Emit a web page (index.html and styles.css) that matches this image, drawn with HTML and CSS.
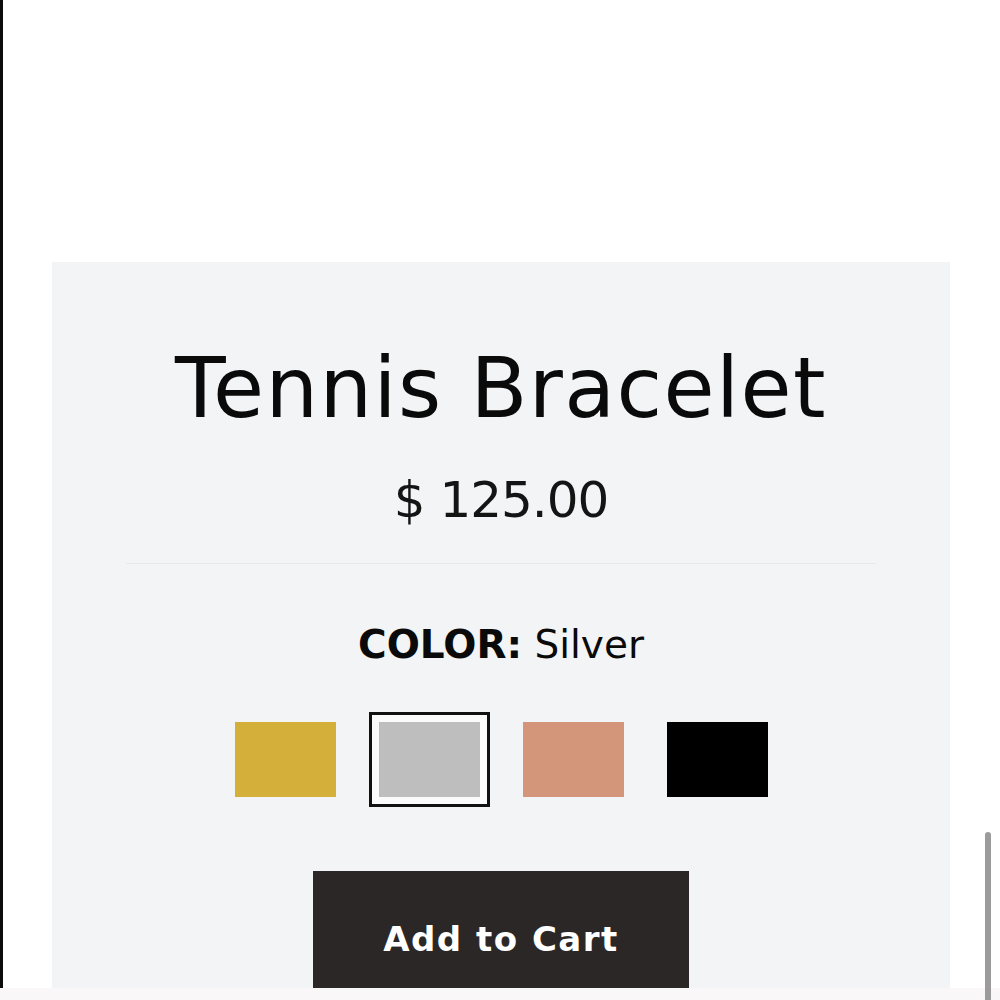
FILE: index.html
```html
<!DOCTYPE html>
<html lang="en">
<head>
<meta charset="utf-8">
<title>Tennis Bracelet</title>
<link rel="stylesheet" href="styles.css">
</head>
<body>
<div class="page">
  <div class="frame">
    <section class="card">
      <h1 class="title">Tennis Bracelet</h1>
      <p class="price">$ 125.00</p>
      <hr class="divider">
      <p class="color-label"><strong>COLOR:</strong> Silver</p>
      <div class="swatches">
        <span class="swatch gold"></span>
        <span class="swatch silver selected"></span>
        <span class="swatch rose"></span>
        <span class="swatch black"></span>
      </div>
      <button class="cart-btn" type="button">Add to Cart</button>
    </section>
  </div>
  <div class="bottom-strip"></div>
  <div class="scrollbar"></div>
</div>
</body>
</html>
```
FILE: styles.css
```css
html, body {
  margin: 0;
  padding: 0;
  background: #ffffff;
}

.page {
  position: relative;
  width: 1000px;
  height: 1000px;
  overflow: hidden;
  font-family: "DejaVu Sans", "Liberation Sans", sans-serif;
}

.frame {
  box-sizing: border-box;
  height: 988px;
  border-left: 3px solid #0c0c0c;
  padding-top: 262px;
  padding-left: 49px;
  overflow: hidden;
}

.card {
  width: 898px;
  min-height: 800px;
  background: #f2f4f5;
  display: flex;
  flex-direction: column;
  align-items: center;
  padding-top: 85px;
  box-sizing: border-box;
}

.title {
  margin: 0;
  font-size: 83px;
  line-height: 1;
  font-weight: 400;
  color: #0a0a0a;
  letter-spacing: 1.4px;
}

.price {
  margin: 45px 0 0;
  font-size: 50px;
  line-height: 1;
  color: #141414;
  letter-spacing: -1px;
}

.divider {
  width: 750px;
  margin: 38px 0 0;
  border: 0;
  height: 1px;
  background: #e7e9eb;
}

.color-label {
  margin: 61px 0 0;
  font-size: 39px;
  line-height: 1;
  color: #0a0a0a;
}

.color-label strong {
  font-weight: 700;
}

.swatches {
  margin-top: 58px;
  display: flex;
  gap: 43px;
}

.swatch {
  display: block;
  width: 101px;
  height: 75px;
}

.gold { background: #d4b03a; }
.silver { background: #bebebe; }
.rose { background: #d3967b; }
.black { background: #000; }

.selected {
  box-shadow: 0 0 0 7px #fbfbfb, 0 0 0 10px #111;
}

.cart-btn {
  margin-top: 74px;
  width: 376px;
  height: 170px;
  padding: 51px 0 0;
  align-self: center;
  display: flex;
  justify-content: center;
  align-items: flex-start;
  border: 0;
  background: #2b2726;
  color: #fff;
  font-family: "DejaVu Sans", "Liberation Sans", sans-serif;
  font-weight: 700;
  font-size: 34px;
  line-height: 1;
  letter-spacing: 1.5px;
}

.bottom-strip {
  height: 12px;
  background: #f9f7f7;
}

.scrollbar {
  position: absolute;
  right: 9px;
  top: 832px;
  width: 6px;
  height: 175px;
  border-radius: 3px;
  background: #9b9b9b;
}
```
